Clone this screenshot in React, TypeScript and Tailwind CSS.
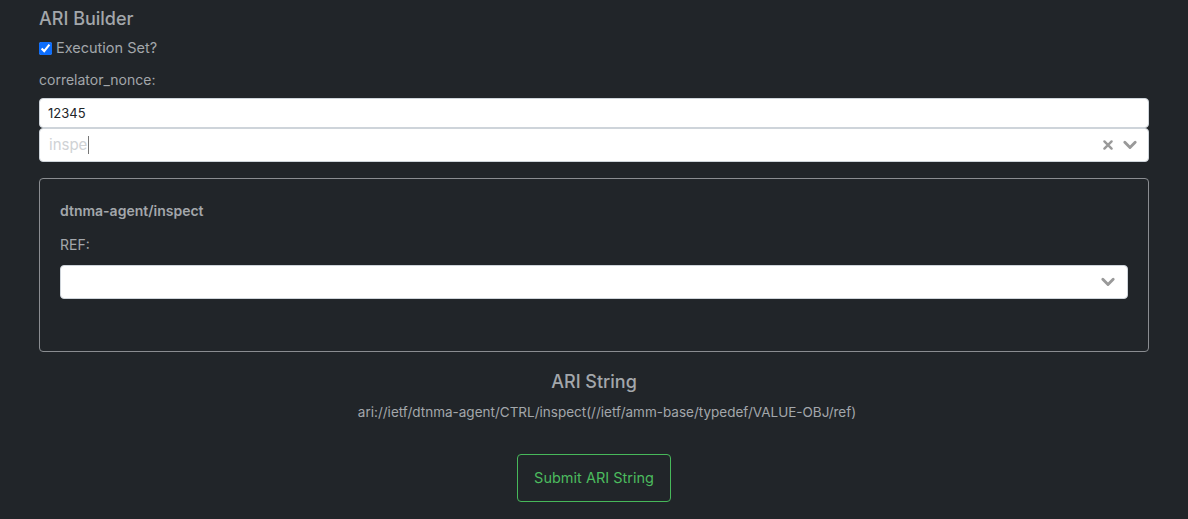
import React from 'react';

const ChevronDown = () => (
  <svg width="16" height="16" viewBox="0 0 20 20" className="text-[#999]">
    <path d="M3.5 6.5 L10 13 L16.5 6.5" stroke="currentColor" strokeWidth="3.6" fill="none" strokeLinecap="round" strokeLinejoin="round" />
  </svg>
);

const Cross = () => (
  <svg width="12" height="12" viewBox="0 0 20 20" className="text-[#999]">
    <path d="M4 4 L16 16 M16 4 L4 16" stroke="currentColor" strokeWidth="4" strokeLinecap="round" />
  </svg>
);

const App: React.FC = () => {
  return (
    <div className="min-h-[519px] w-full bg-[#212529] text-[#adb5bd] font-['Inter','Liberation_Sans',sans-serif]">
      <div className="mx-auto w-[1110px] pt-[8px]">
        <h5 className="text-[18px] font-medium leading-[22px] text-[#a3a7ab]">ARI Builder</h5>

        <label className="mt-[9px] flex items-center gap-[4px] text-[14.5px] leading-[18px] text-[#a3a7ab]">
          <input type="checkbox" defaultChecked className="h-[13px] w-[13px] accent-[#0d6efd]" />
          <span>Execution Set?</span>
        </label>

        <div className="mt-[14px] text-[14px] leading-[18px] text-[#a3a7ab]">correlator_nonce:</div>

        <div className="mt-[9px]">
          <input
            type="text"
            defaultValue="12345"
            className="block h-[30px] w-full rounded-[4px] border border-[#ced4da] bg-white px-[8px] text-[13px] text-[#212529] outline-none"
          />
          <div className="flex h-[34px] w-full items-center rounded-[4px] border border-[#ced4da] bg-white pl-[9px] pr-[10px]">
            <span className="text-[15px] text-[#cfd2d5]">inspe</span>
            <span className="ml-px h-[18px] w-px bg-[#777]" />
            <div className="ml-auto flex items-center gap-[8px]">
              <Cross />
              <ChevronDown />
            </div>
          </div>
        </div>

        <div className="mt-[16px] h-[174px] rounded-[4px] border border-[#8a8d91] px-[20px] pt-[23px]">
          <div className="text-[14px] font-semibold leading-[18px] text-[#a3a7ab]">dtnma-agent/inspect</div>
          <div className="mt-[16px] text-[14px] leading-[18px] text-[#a3a7ab]">REF:</div>
          <div className="mt-[11px] flex h-[34px] w-full items-center rounded-[4px] border border-[#ced4da] bg-white pr-[11px]">
            <div className="ml-auto">
              <ChevronDown />
            </div>
          </div>
        </div>

        <div className="mt-[19px] text-center text-[18px] font-medium leading-[22px] text-[#a3a7ab]">ARI String</div>
        <div className="mt-[10px] pl-[26px] text-center text-[13.5px] leading-[18px] text-[#a3a7ab]">
          ari://ietf/dtnma-agent/CTRL/inspect(//ietf/amm-base/typedef/VALUE-OBJ/ref)
        </div>

        <div className="mt-[33px] flex justify-center">
          <button className="h-[48px] w-[154px] rounded-[4px] border border-[#47b85a] text-[14.5px] text-[#4cbb5e]">
            Submit ARI String
          </button>
        </div>
      </div>
    </div>
  );
};

export default App;
